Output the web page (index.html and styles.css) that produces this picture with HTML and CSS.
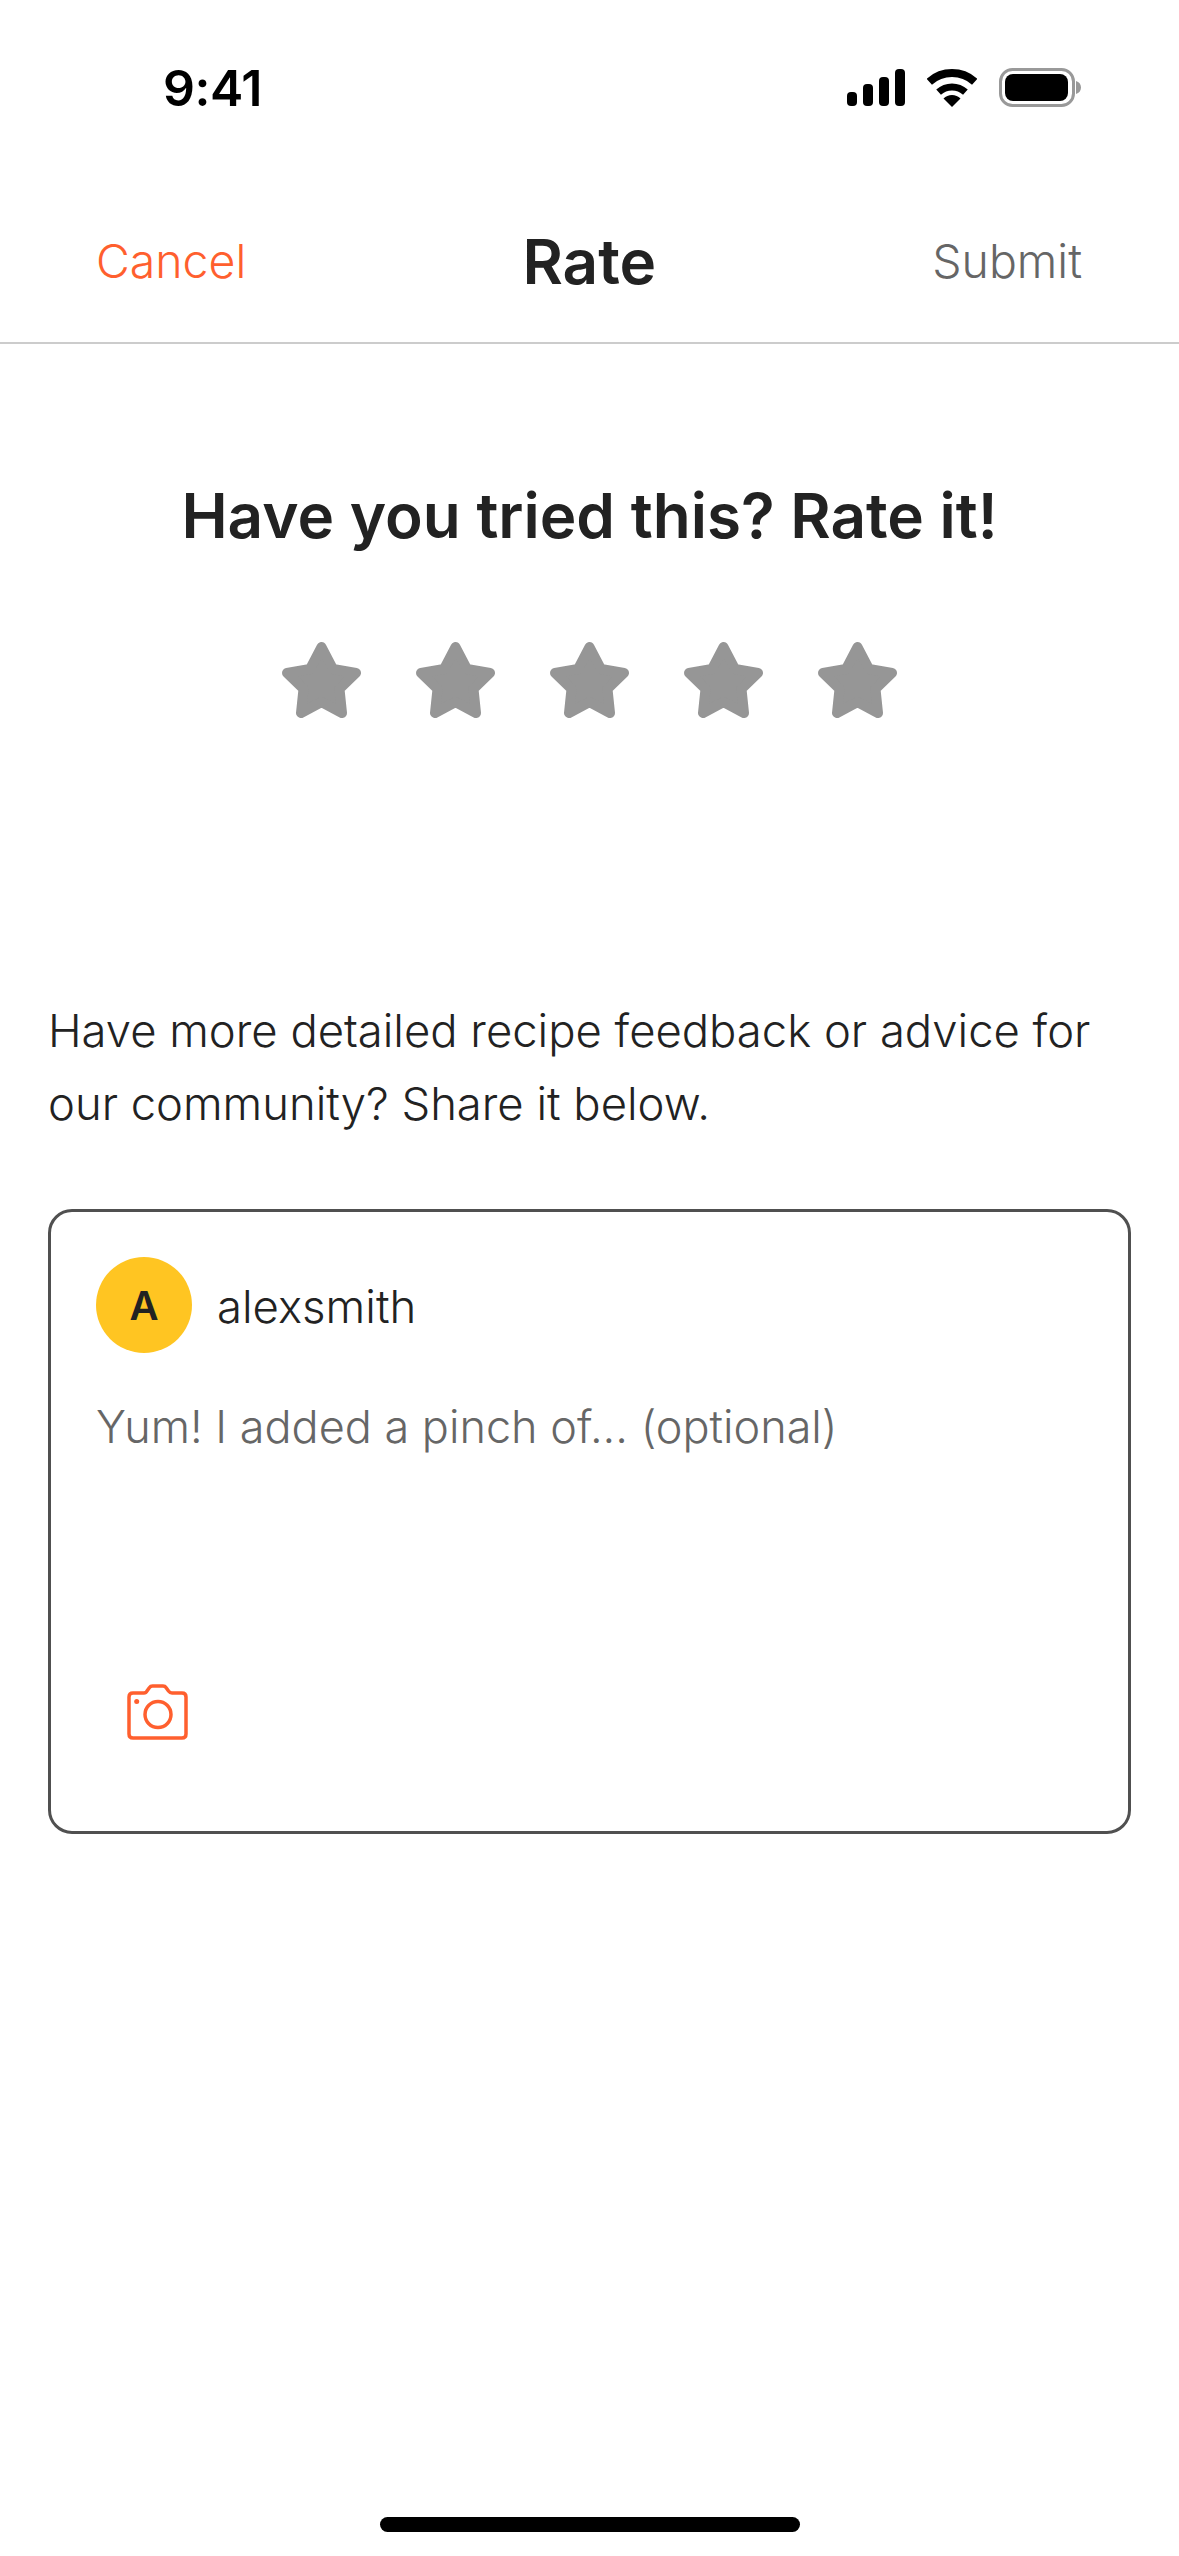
FILE: index.html
```html
<!DOCTYPE html>
<html lang="en">
<head>
    <meta charset="UTF-8">
    <title>Rate</title>
    <link rel="stylesheet" href="styles.css">
</head>
<body>
    <div class="status-bar">
        <span class="time">9:41</span>
        <div class="status-icons">
            <svg width="58" height="37" viewBox="0 0 58 37"><rect x="0" y="23" width="10" height="14" rx="4"/><rect x="16" y="15" width="10" height="22" rx="4"/><rect x="32" y="8" width="10" height="29" rx="4"/><rect x="48" y="0" width="10" height="37" rx="4"/></svg>
            <svg width="50" height="38" viewBox="0 0 50 38"><path d="M2.3 12.7A34 34 0 0 1 47.7 12.7" fill="none" stroke="#000" stroke-width="8"/><path d="M11.6 23.1A20 20 0 0 1 38.4 23.1" fill="none" stroke="#000" stroke-width="7"/><path d="M25 38L16.5 29.5A12 12 0 0 1 33.5 29.5Z"/></svg>
            <svg width="82" height="39" viewBox="0 0 82 39"><rect x="1.5" y="1.5" width="73" height="36" rx="12" fill="none" stroke="#999" stroke-width="3"/><rect x="6" y="6" width="63" height="27" rx="8"/><path d="M77 13C80 14 82 16 82 19.5C82 23 80 25 77 26Z" fill="#999"/></svg>
        </div>
    </div>

    <div class="nav">
        <span class="cancel">Cancel</span>
        <span class="nav-title">Rate</span>
        <span class="submit">Submit</span>
    </div>

    <div class="content">
        <h1 class="rate-title">Have you tried this? Rate it!</h1>
        <div class="stars">
            <svg class="star" viewBox="0 0 79 76"><polygon points="39.5,5 51,27 74,31 57.5,47 60,71 39.5,60 19,71 21.5,47 5,31 28,27"/></svg>
            <svg class="star" viewBox="0 0 79 76"><polygon points="39.5,5 51,27 74,31 57.5,47 60,71 39.5,60 19,71 21.5,47 5,31 28,27"/></svg>
            <svg class="star" viewBox="0 0 79 76"><polygon points="39.5,5 51,27 74,31 57.5,47 60,71 39.5,60 19,71 21.5,47 5,31 28,27"/></svg>
            <svg class="star" viewBox="0 0 79 76"><polygon points="39.5,5 51,27 74,31 57.5,47 60,71 39.5,60 19,71 21.5,47 5,31 28,27"/></svg>
            <svg class="star" viewBox="0 0 79 76"><polygon points="39.5,5 51,27 74,31 57.5,47 60,71 39.5,60 19,71 21.5,47 5,31 28,27"/></svg>
        </div>

        <p class="intro">Have more detailed recipe feedback or advice for<br>our community? Share it below.</p>

        <div class="card">
            <div class="user-row">
                <div class="avatar">A</div>
                <span class="username">alexsmith</span>
            </div>
            <div class="placeholder">Yum! I added a pinch of... (optional)</div>
            <svg class="camera" width="61" height="56" viewBox="0 0 61 56">
                <path d="M6 9H17Q19 9 20 7L22.5 3.5Q23.5 2 25.5 2H36Q38 2 39 3.5L41.5 7Q43 9 45 9H55Q59 9 59 13V50Q59 54 55 54H6Q2 54 2 50V13Q2 9 6 9Z"/>
                <circle cx="31" cy="30.5" r="13"/>
                <circle class="camera-dot" cx="9.7" cy="17.5" r="2.5"/>
            </svg>
        </div>
    </div>

    <div class="home-indicator"></div>
</body>
</html>
```

FILE: styles.css
```css
* {
    box-sizing: border-box;
}
html, body {
    margin: 0;
    height: 2556px;
}
body {
    display: flex;
    flex-direction: column;
    background: #fff;
    color: #222;
    font-family: Inter, "Noto Sans", sans-serif;
    overflow: hidden;
}
.status-bar {
    height: 180px;
    padding: 60px 98px 0 163px;
    display: flex;
    justify-content: space-between;
    align-items: flex-start;
}
.time {
    color: #000;
    font-size: 50px;
    font-weight: 600;
    letter-spacing: -0.5px;
    line-height: 56px;
}
.status-icons {
    display: flex;
    align-items: center;
    gap: 22px;
    margin-top: 8px;
}
.nav {
    height: 164px;
    padding: 0 97px 0 96px;
    display: flex;
    justify-content: space-between;
    align-items: center;
    border-bottom: 2px solid #ccc;
    font-size: 46.4px;
    font-weight: 350;
}
.cancel {
    color: #ff5f2e;
}
.submit {
    color: #666;
}
.nav-title {
    font-size: 62px;
    font-weight: 600;
}
.content {
    flex: 1;
    padding: 0 48px;
}
.rate-title {
    margin: 138px 0 0;
    text-align: center;
    font-size: 62px;
    font-weight: 600;
    line-height: 68px;
}
.stars {
    margin-top: 92px;
    display: flex;
    justify-content: center;
    gap: 55px;
}
.star {
    width: 79px;
    height: 76px;
    fill: #969696;
    stroke: #969696;
    stroke-width: 10;
    stroke-linejoin: round;
}
.intro {
    margin: 276px 0 0;
    font-size: 45.4px;
    font-weight: 350;
    line-height: 73px;
}
.card {
    margin-top: 69px;
    height: 625px;
    padding: 45px 45px 0;
    border: 3px solid #505050;
    border-radius: 24px;
}
.user-row {
    display: flex;
    align-items: center;
    gap: 25px;
}
.avatar {
    width: 96px;
    height: 96px;
    border-radius: 50%;
    background: #ffc522;
    display: flex;
    align-items: center;
    justify-content: center;
    font-size: 40px;
    font-weight: 600;
}
.username {
    font-size: 45.5px;
    font-weight: 350;
    padding-top: 2px;
}
.placeholder {
    margin-top: 46px;
    font-size: 45px;
    font-weight: 350;
    line-height: 56px;
    color: #666;
}
.camera {
    display: block;
    margin: 229px 0 0 31px;
    fill: none;
    stroke: #ff5f2e;
    stroke-width: 3.5;
}
.camera-dot {
    fill: #ff5f2e;
    stroke: none;
}
.home-indicator {
    position: absolute;
    left: 380px;
    top: 2517px;
    width: 420px;
    height: 15px;
    border-radius: 8px;
    background: #000;
}
```
